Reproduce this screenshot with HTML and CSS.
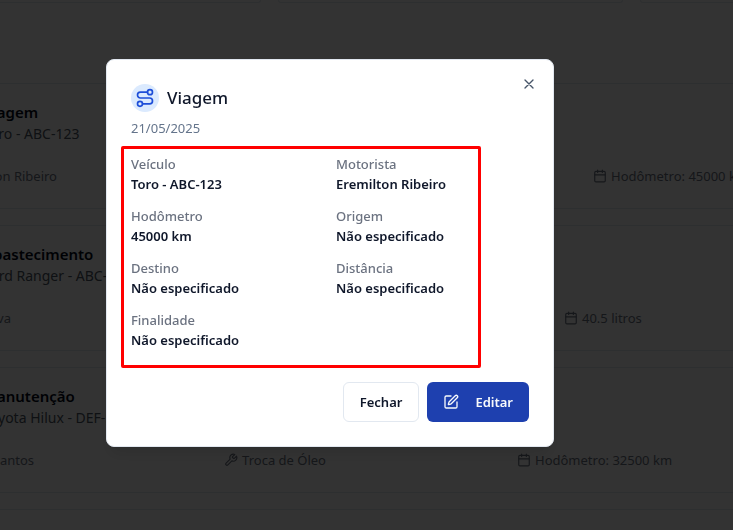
FILE: index.html
```html
<!DOCTYPE html>
<html lang="pt-BR">
<head>
<meta charset="utf-8">
<meta name="viewport" content="width=device-width, initial-scale=1">
<title>Viagem</title>
<link rel="stylesheet" href="styles.css">
</head>
<body>
<svg class="sprite" aria-hidden="true">
  <symbol id="calendar" viewBox="0 0 24 24"><path d="M8 2v4M16 2v4M3 10h18"/><rect x="3" y="4" width="18" height="18" rx="2"/></symbol>
  <symbol id="wrench" viewBox="0 0 24 24"><path d="M14.7 6.3a1 1 0 0 0 0 1.4l1.6 1.6a1 1 0 0 0 1.4 0l3.77-3.77a6 6 0 0 1-7.94 7.94l-6.91 6.91a2.12 2.12 0 0 1-3-3l6.91-6.91a6 6 0 0 1 7.94-7.94l-3.76 3.76z"/></symbol>
  <symbol id="route" viewBox="0 0 24 24"><circle cx="6" cy="19" r="3"/><path d="M9 19h8.5a3.5 3.5 0 0 0 0-7h-11a3.5 3.5 0 0 1 0-7H15"/><circle cx="18" cy="5" r="3"/></symbol>
  <symbol id="edit" viewBox="0 0 24 24"><path d="M12 3H5a2 2 0 0 0-2 2v14a2 2 0 0 0 2 2h14a2 2 0 0 0 2-2v-7"/><path d="M18.375 2.625a1 1 0 0 1 3 3l-9.013 9.014a2 2 0 0 1-.853.505l-2.873.84a.5.5 0 0 1-.62-.62l.84-2.873a2 2 0 0 1 .506-.852z"/></symbol>
  <symbol id="close" viewBox="0 0 24 24"><path d="M18 6 6 18M6 6l12 12"/></symbol>
</svg>

<main class="page">
  <div class="stats"><div class="stat"></div><div class="stat"></div><div class="stat"></div></div>
  <section class="records">
    <article class="record">
      <h3>Viagem</h3>
      <p>Toro - ABC-123</p>
      <div class="meta meta-trip">
        <span class="driver">Eremilton Ribeiro</span>
        <span class="fact last"><svg class="icon"><use href="#calendar"/></svg>Hodômetro: 45000 km</span>
      </div>
    </article>
    <article class="record">
      <h3>Abastecimento</h3>
      <p>Ford Ranger - ABC-123</p>
      <div class="meta meta-fuel">
        <span class="driver">Silva</span>
        <span class="fact last"><svg class="icon"><use href="#calendar"/></svg>40.5 litros</span>
      </div>
    </article>
    <article class="record">
      <h3>Manutenção</h3>
      <p>Toyota Hilux - DEF-5678</p>
      <div class="meta meta-service">
        <span class="driver">Santos</span>
        <span class="fact"><svg class="icon"><use href="#wrench"/></svg>Troca de Óleo</span>
        <span class="fact last"><svg class="icon"><use href="#calendar"/></svg>Hodômetro: 32500 km</span>
      </div>
    </article>
    <article class="record"></article>
  </section>
</main>

<div class="overlay">
  <div class="dialog" role="dialog" aria-modal="true" aria-labelledby="dialog-title">
    <button class="close" type="button" aria-label="Fechar"><svg class="icon-md"><use href="#close"/></svg></button>
    <header class="dialog-head">
      <div class="heading">
        <span class="badge"><svg class="icon-lg"><use href="#route"/></svg></span>
        <h2 id="dialog-title">Viagem</h2>
      </div>
      <p class="date">21/05/2025</p>
    </header>
    <dl class="details">
      <div><dt>Veículo</dt><dd>Toro - ABC-123</dd></div>
      <div><dt>Motorista</dt><dd>Eremilton Ribeiro</dd></div>
      <div><dt>Hodômetro</dt><dd>45000 km</dd></div>
      <div><dt>Origem</dt><dd>Não especificado</dd></div>
      <div><dt>Destino</dt><dd>Não especificado</dd></div>
      <div><dt>Distância</dt><dd>Não especificado</dd></div>
      <div><dt>Finalidade</dt><dd>Não especificado</dd></div>
    </dl>
    <footer class="actions">
      <button class="btn btn-outline" type="button">Fechar</button>
      <button class="btn btn-primary" type="button"><svg class="icon-md"><use href="#edit"/></svg>Editar</button>
    </footer>
  </div>
</div>
</body>
</html>
```
FILE: styles.css
```css
* { box-sizing: border-box; }

body {
  margin: 0;
  min-height: 100vh;
  overflow: hidden;
  background: #fff;
  color: #020817;
  font: 14px/20px "Segoe UI", "Noto Sans", sans-serif;
}

h2, h3, p, dl, dd { margin: 0; }

svg {
  flex: none;
  fill: none;
  stroke: currentColor;
  stroke-width: 2;
  stroke-linecap: round;
  stroke-linejoin: round;
}

.sprite { position: absolute; width: 0; height: 0; }
.icon { width: 14px; height: 14px; }
.icon-md { width: 16px; height: 16px; }
.icon-lg { width: 20px; height: 20px; }

/* Record list behind the dialog */
.page {
  height: 100vh;
  overflow: hidden;
}

.stats {
  display: grid;
  grid-template-columns: 345px 345px 345px;
  gap: 17px;
  margin-left: -84px;
}

.stat {
  height: 3px;
  border: 1px solid #e2e8f0;
  border-top: 0;
  border-radius: 0 0 8px 8px;
}

.records {
  display: grid;
  gap: 16px;
  margin: 80px -24px 0 -34px;
}

.record {
  height: 126px;
  padding: 16px;
  border: 1px solid #e2e8f0;
  border-radius: 8px;
}

.record h3 {
  font-size: 15px;
  font-weight: 600;
  line-height: 24px;
}

.record p {
  color: #4b5563;
  font-size: 14px;
  white-space: nowrap;
}

.meta {
  display: grid;
  margin-top: 22px;
  color: #6b7280;
  font-size: 13px;
  white-space: nowrap;
}

.meta-trip { grid-template-columns: 74px 1fr 147px; }
.meta-fuel { grid-template-columns: 28px 1fr 176px; }
.meta-service { grid-template-columns: 51px 292px 1fr 223px; }

.driver { justify-self: end; }

.fact {
  display: flex;
  align-items: center;
  justify-self: end;
  gap: 4px;
}

.meta .last { grid-column-end: -1; justify-self: start; }

/* Dialog */
.overlay {
  position: fixed;
  inset: 0;
  display: flex;
  align-items: center;
  justify-content: center;
  padding: 0 73px 24px 0;
  background: rgba(0, 0, 0, 0.8);
}

.dialog {
  position: relative;
  width: 100%;
  max-width: 448px;
  padding: 24px;
  border: 1px solid #e2e8f0;
  border-radius: 8px;
  background: #fff;
  box-shadow: 0 10px 15px -3px rgba(0, 0, 0, 0.1), 0 4px 6px -4px rgba(0, 0, 0, 0.1);
}

.close {
  position: absolute;
  top: 16px;
  right: 16px;
  display: flex;
  padding: 0;
  border: 0;
  background: none;
  color: #475569;
}

.heading {
  display: flex;
  align-items: center;
  gap: 8px;
}

.badge {
  display: flex;
  padding: 4px;
  border-radius: 50%;
  background: #dbeafe;
  color: #1d4ed8;
}

.heading h2 {
  color: #0f172a;
  font-size: 17px;
  font-weight: 500;
  line-height: 28px;
}

.date {
  margin-top: 6px;
  color: #64748b;
  font-size: 13px;
}

.details {
  position: relative;
  display: grid;
  grid-template-columns: 1fr 1fr;
  gap: 12px;
  margin-top: 16px;
  font-size: 13px;
}

/* Highlight frame around the details */
.details::after {
  content: "";
  position: absolute;
  inset: -8px 48px -18px -10px;
  border: 3px solid #f00;
  border-radius: 2px;
}

.details dt { color: #6b7280; font-weight: 500; }
.details dd { color: #0f172a; font-weight: 600; }

.actions {
  display: flex;
  justify-content: flex-end;
  gap: 8px;
  margin-top: 32px;
}

.btn {
  display: flex;
  align-items: center;
  gap: 16px;
  height: 40px;
  padding: 0 16px;
  border: 0;
  border-radius: 6px;
  font: 600 13px/20px "Segoe UI", "Noto Sans", sans-serif;
}

.btn-outline {
  border: 1px solid #e2e8f0;
  background: #fff;
  color: #0f172a;
}

.btn-primary {
  background: #1e40af;
  color: #f8fafc;
}
```
